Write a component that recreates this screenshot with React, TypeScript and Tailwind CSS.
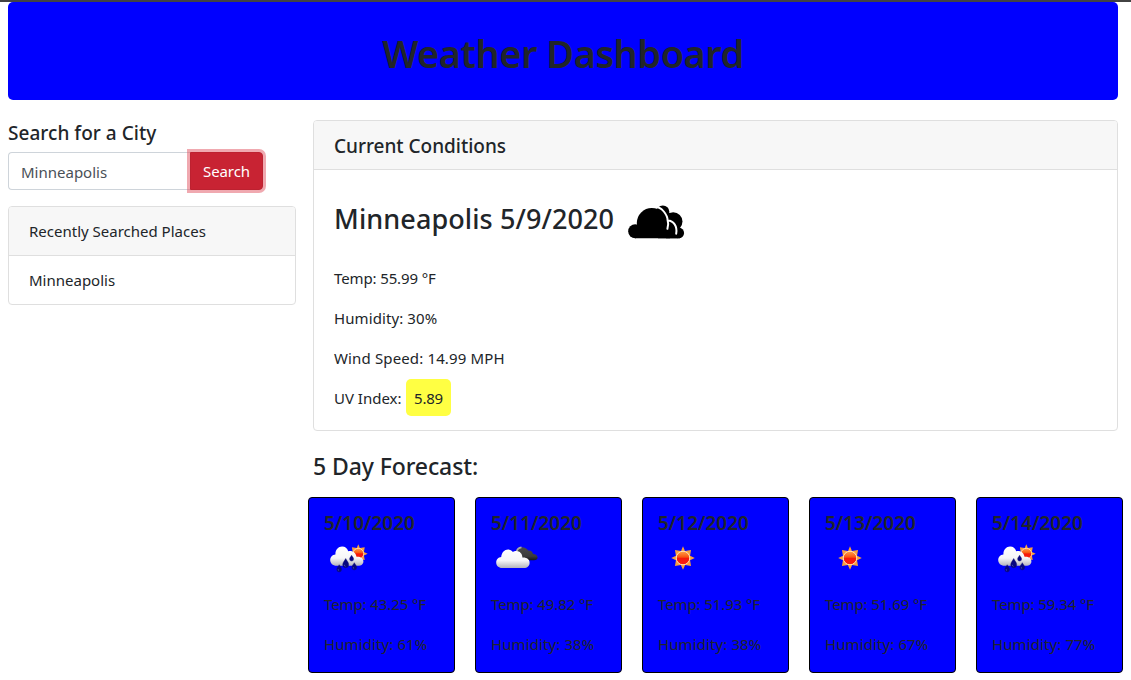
type Sky = "rain" | "clouds" | "sun";

interface Day {
  date: string;
  sky: Sky;
  temp: string;
  humidity: string;
}

const days: Day[] = [
  { date: "5/10/2020", sky: "rain", temp: "43.25", humidity: "61" },
  { date: "5/11/2020", sky: "clouds", temp: "49.82", humidity: "38" },
  { date: "5/12/2020", sky: "sun", temp: "51.93", humidity: "38" },
  { date: "5/13/2020", sky: "sun", temp: "51.69", humidity: "67" },
  { date: "5/14/2020", sky: "rain", temp: "59.34", humidity: "77" },
];

function BrokenClouds() {
  return (
    <svg width="57" height="34" viewBox="0 0 57 34" className="shrink-0">
      <g fill="#000">
        <circle cx="34.8" cy="7" r="6.6" />
        <circle cx="45.2" cy="16.6" r="9.3" />
        <circle cx="50.8" cy="27.9" r="5.3" />
        <path d="M30 8h12v25.2H30z" />
        <path d="M38 20h14v13.200H38z" />
        <circle cx="23.8" cy="18" r="15" />
        <circle cx="7.200" cy="26.200" r="7" />
        <path d="M7 20h43v13.200H7z" />
      </g>
      <path
        d="M23.800 1.200c9.500 0 16 6.600 16.300 15.200v-5L36 2.500 30.500 0H24Z"
        fill="none"
      />
      <path
        d="M24.500 1.500c4.500-.2 8.600 1.600 11.300 5 2.600 3.200 3.800 6 3.800 8.700 1 2.900.8 5.700-.2 8.600M39.800 15.500c5.800.3 9.700 5.600 8.400 13.200"
        fill="none"
        stroke="#fff"
        strokeWidth="2"
        strokeLinecap="round"
      />
    </svg>
  );
}

function SkyDefs({ id }: { id: string }) {
  return (
    <defs>
      <linearGradient id={`${id}-disc`} x1="0" y1="0" x2="0" y2="1">
        <stop offset="0" stopColor="#ffa04a" />
        <stop offset="0.45" stopColor="#f9520f" />
        <stop offset="0.5" stopColor="#f4180c" />
        <stop offset="1" stopColor="#fb1d10" />
      </linearGradient>
      <linearGradient id={`${id}-white`} x1="0" y1="0" x2="0" y2="1">
        <stop offset="0" stopColor="#fff" />
        <stop offset="0.6" stopColor="#f6f6f8" />
        <stop offset="1" stopColor="#b4b4bc" />
      </linearGradient>
      <linearGradient id={`${id}-dark`} x1="0" y1="0" x2="0" y2="1">
        <stop offset="0" stopColor="#4a4a4a" />
        <stop offset="0.7" stopColor="#3a3a3a" />
        <stop offset="1" stopColor="#151515" />
      </linearGradient>
    </defs>
  );
}

function Sun({ id, x, y, scale }: { id: string; x: number; y: number; scale: number }) {
  return (
    <g transform={`translate(${x} ${y}) scale(${scale})`}>
      <path
        d="M0-12 2-7.200 8.200-8.200 7.200-2.200 12 0 7.200 2.200 8.200 8.200 2.200 7.200 0 12-2.200 7.200-8.200 8.200-7.200 2.200-12 0-7.200-2.200-8.200-8.200-2-7.200Z"
        fill="#f8a03c"
      />
      <circle r="6.900" fill={`url(#${id}-disc)`} stroke="#ffe3bd" strokeWidth="1" />
    </g>
  );
}

function SkyIcon({ sky, id }: { sky: Sky; id: string }) {
  return (
    <svg width="50" height="50" viewBox="0 0 50 50" className="block">
      <SkyDefs id={id} />
      {sky === "sun" && <Sun id={id} x={25} y={25} scale={0.98} />}
      {sky === "clouds" && (
        <>
          <path
            d="M24 22c0-4.500 3-7.800 7-7.800 2.800 0 5 1.300 6.200 3.400 2.500-.4 4.600 1.200 4.800 3.500 2.700.2 4.600 1.500 4.600 3.500 0 1.700-1.500 2.700-3.600 2.700H28Z"
            fill={`url(#${id}-dark)`}
          />
          <path d="M25.500 19.500c.4-3.200 2.300-5 5-5.200" fill="none" stroke="#a9a9a9" strokeWidth="1.800" />
          <path
            d="M11 35c-3.300 0-5.800-2.300-5.800-5.500 0-3 2.100-5.300 5-5.600C10.700 19.500 13.500 16.500 17 16.500c2 0 3.800 1 4.900 2.500 1-.8 2-1.100 3.300-1.100 3.700 0 6.200 2.800 6.200 6.600 4.300-.4 7.200 1.800 7.200 5.200 0 3.200-2.300 5.300-5.700 5.300Z"
            fill={`url(#${id}-white)`}
          />
        </>
      )}
      {sky === "rain" && (
        <g transform="translate(1 0)">
          <Sun id={id} x={33.3} y={20.7} scale={0.78} />
          <path
            d="M11.500 32.800c-3.700 0-6.300-2.400-6.300-5.800 0-3.100 2.200-5.400 5.200-5.600 0-4.700 2.900-7.800 6.700-7.800 3 0 5.300 1.900 6.100 4.700 3.800-1.100 7.500 1.100 8.300 5.400 4-.4 6.900 1.600 6.900 4.700 0 2.600-2.300 4.400-5.200 4.400Z"
            fill={`url(#${id}-white)`}
          />
          <g fill="#070780" stroke="#10106e" strokeWidth="0.400">
            <path d="M20.700 25.500c1 2.200 3 3.800 3 6.200a3 3 0 0 1-6 0c0-2.400 2-4 3-6.200Z" />
            <path d="M26.600 22.200c.6 1.400 2 2.300 2 3.900a2 2 0 0 1-4 0c0-1.600 1.400-2.500 2-3.900Z" />
            <path d="M14.200 31.700c.8 1.700 2.400 2.900 2.400 4.800a2.400 2.400 0 0 1-4.800 0c0-1.900 1.600-3.100 2.400-4.800Z" />
            <path d="M29.300 29.700c.8 1.700 2.400 2.900 2.400 4.800a2.400 2.400 0 0 1-4.800 0c0-1.900 1.600-3.100 2.400-4.800Z" />
          </g>
          <path
            d="M19.400 31.800c0 .8.400 1.400 1 1.600M13.200 36.400c0 .6.300 1 .8 1.200M28.300 34.400c0 .6.300 1 .8 1.200"
            fill="none"
            stroke="#5a6ad0"
            strokeWidth="0.700"
          />
        </g>
      )}
    </svg>
  );
}

function ForecastCard({ day, id }: { day: Day; id: string }) {
  return (
    <div className="h-[176px] w-[147px] shrink-0 rounded border border-black bg-[#0000ff] px-[15px] pt-[13px]">
      <h5 className="text-[19px] leading-6 font-semibold tracking-[-0.05px]">{day.date}</h5>
      <div className="-mt-[2px] h-[59px]">
        <SkyIcon sky={day.sky} id={id} />
      </div>
      <p className="mb-4 whitespace-nowrap tracking-[-0.1px]">Temp: {day.temp} °F</p>
      <p className="whitespace-nowrap tracking-[0.1px]">Humidity: {day.humidity}%</p>
    </div>
  );
}

export default function App() {
  return (
    <div className="h-[680px] w-[1131px] overflow-hidden border-t-2 border-[#424242] bg-white font-['Noto_Sans','Open_Sans',sans-serif] text-[15px] leading-6 text-[#212529]">
      <header className="mr-[13px] ml-2 flex h-[98px] items-center justify-center rounded-[5px] bg-[#0000ff]">
        <h1 className="pt-[4px] text-[38px] leading-[48px] font-semibold tracking-[-0.5px]">Weather Dashboard</h1>
      </header>

      <div className="mt-5 flex pl-2">
        <aside className="w-72 shrink-0">
          <h5 className="pt-px text-[19px] leading-6 font-medium tracking-[0.04px]">Search for a City</h5>
          <div className="mt-[7px] flex">
            <input
              className="h-[38px] w-[182px] rounded-l border border-r-0 border-[#ced4da] bg-white px-3 pt-[2px] text-[#495057] outline-none"
              defaultValue="Minneapolis"
            />
            <button className="h-[38px] w-[73px] rounded-r border border-[#bd2130] bg-[#c82333] tracking-[-0.1px] text-white shadow-[0_0_0_3px_rgba(225,83,97,0.5)]">
              Search
            </button>
          </div>
          <div className="mt-4 h-[99px] overflow-hidden rounded border border-[#dfdfdf]">
            <div className="h-[49px] border-b border-[#dfdfdf] bg-[#f7f7f7] px-5 py-3">Recently Searched Places</div>
            <div className="px-5 py-3">Minneapolis</div>
          </div>
        </aside>

        <main className="ml-[17px] w-[805px] shrink-0">
          <section className="h-[311px] overflow-hidden rounded border border-[#dfdfdf]">
            <h5 className="h-[49px] border-b border-[#dfdfdf] bg-[#f7f7f7] px-5 pt-[13px] text-[19px] leading-6 font-medium tracking-[-0.02px]">
              Current Conditions
            </h5>
            <div className="px-5 pt-[29px]">
              <div className="flex h-[40px] items-center">
                <h3 className="w-[294px] text-[27px] leading-10 font-medium tracking-[0.09px] whitespace-nowrap">
                  Minneapolis 5/9/2020
                </h3>
                <div className="pt-[6px]">
                  <BrokenClouds />
                </div>
              </div>
              <p className="mt-[27px] tracking-[-0.12px]">Temp: 55.99 °F</p>
              <p className="mt-4 tracking-[0.1px]">Humidity: 30%</p>
              <p className="mt-4 tracking-[0.14px]">Wind Speed: 14.99 MPH</p>
              <p className="mt-[9px] flex h-[37px] items-center">
                <span className="w-[72px]">UV Index:</span>
                <span className="flex h-[37px] w-[45px] items-center justify-center rounded-[5px] bg-[#ffff43] tracking-[-0.2px]">
                  5.89
                </span>
              </p>
            </div>
          </section>

          <h4 className="mt-[21px] text-[23px] leading-[29px] font-medium tracking-[-0.1px]">5 Day Forecast:</h4>
          <div className="mt-4 -ml-[5px] flex gap-5">
            {days.map((day, i) => (
              <ForecastCard key={day.date} day={day} id={`sky${i}`} />
            ))}
          </div>
        </main>
      </div>
    </div>
  );
}
